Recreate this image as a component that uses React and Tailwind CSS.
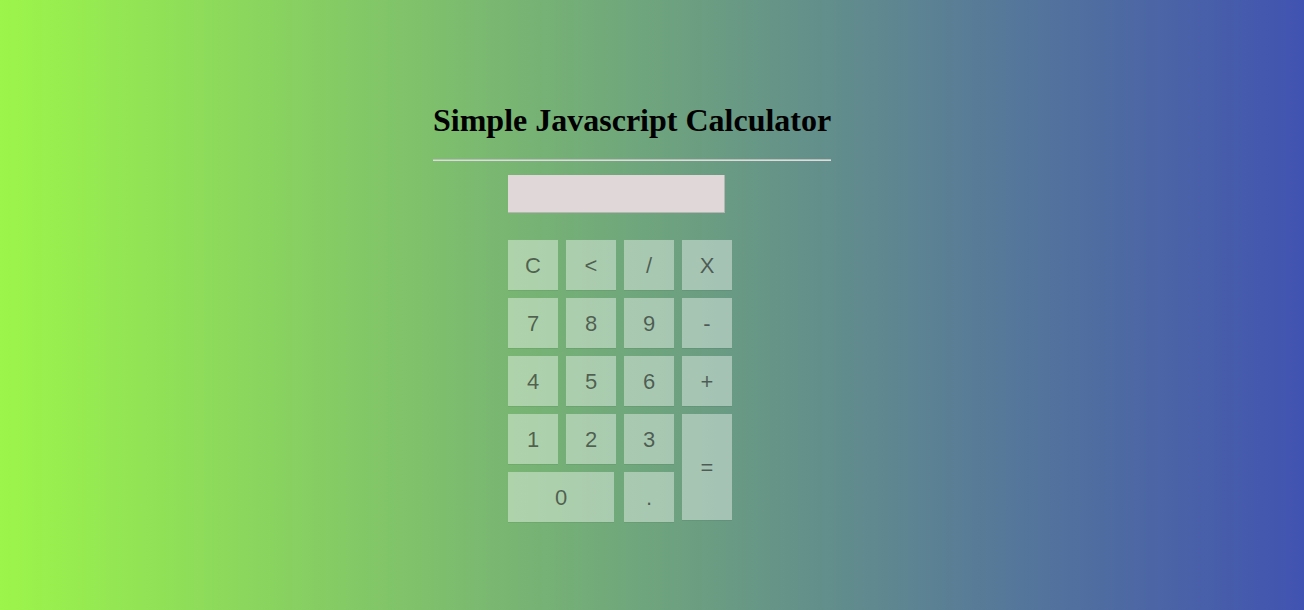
import React from 'react';

const keys = [
    { label: 'C' }, { label: '<' }, { label: '/' }, { label: 'X' },
    { label: '7' }, { label: '8' }, { label: '9' }, { label: '-' },
    { label: '4' }, { label: '5' }, { label: '6' }, { label: '+' },
    { label: '1' }, { label: '2' }, { label: '3' }, { label: '=', tall: true },
    { label: '0', wide: true }, { label: '.' },
];

const Key = ({ label, wide, tall }) => (
    <button
        className={
            'flex items-center justify-center bg-white/40 text-[22px] text-black/55 shadow-[0_1px_0_rgba(0,0,0,0.06)] ' +
            (wide ? 'col-span-2 w-[106px] h-[50px] ' : 'w-[50px] h-[50px] ') +
            (tall ? 'row-span-2 h-[106px]' : '')
        }
        style={{ fontFamily: '"Liberation Sans", Arial, sans-serif' }}
    >
        {label}
    </button>
);

export default function App() {
    return (
        <div className="w-full h-[610px] overflow-hidden bg-[linear-gradient(to_right,#9cf54a,#4153b1)]">
            <div className="flex flex-col items-start pl-[433px] pt-[102px]">
                <div className="flex flex-col">
                    <h1
                        className="text-[32px] leading-[37px] font-bold text-black whitespace-nowrap"
                        style={{ fontFamily: '"Liberation Serif", "Times New Roman", serif' }}
                    >
                        Simple Javascript Calculator
                    </h1>
                    <div className="mt-[20px] h-[2px] w-full border-t border-[#b9bdb9] border-b border-b-[#dcdcdc]" />
                </div>

                <div className="ml-[75px] mt-[14px] w-[217px] h-[38px] bg-[#e0d8d8] border-b border-r border-[#b8b4b4]" />

                <div className="ml-[75px] mt-[27px] grid grid-cols-[50px_50px_50px_50px] gap-[8px]">
                    {keys.map((k, i) => (
                        <Key key={i} {...k} />
                    ))}
                </div>
            </div>
        </div>
    );
}
